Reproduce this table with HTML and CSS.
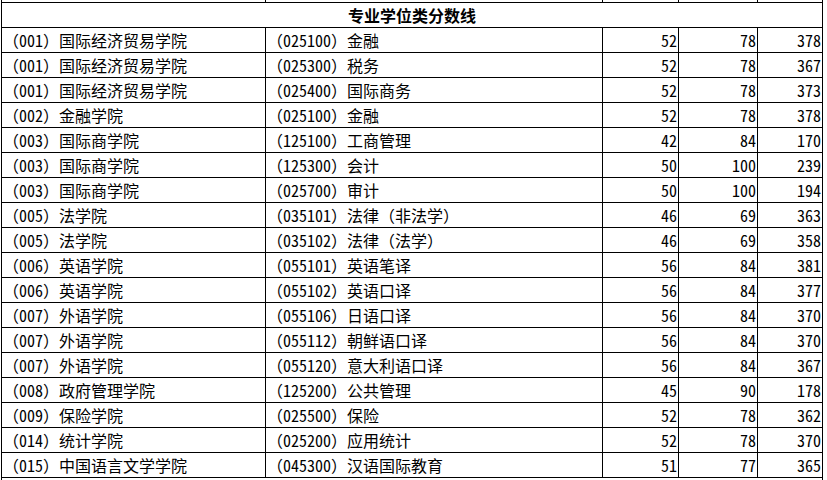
FILE: index.html
```html
<!DOCTYPE html>
<html lang="zh-CN">
<head>
<meta charset="utf-8">
<title>专业学位类分数线</title>
<link rel="stylesheet" href="styles.css">
</head>
<body>
<table class="scores">
  <colgroup>
    <col class="c-school">
    <col class="c-major">
    <col class="c-num1">
    <col class="c-num2">
    <col class="c-total">
  </colgroup>
  <tbody>
    <tr class="cut"><td></td><td></td><td></td><td></td><td></td></tr>
    <tr class="title"><td colspan="5">专业学位类分数线</td></tr>
    <tr><td>（<span class="d">001</span>）国际经济贸易学院</td><td>（<span class="d">025100</span>）金融</td><td class="n">52</td><td class="n">78</td><td class="n">378</td></tr>
    <tr><td>（<span class="d">001</span>）国际经济贸易学院</td><td>（<span class="d">025300</span>）税务</td><td class="n">52</td><td class="n">78</td><td class="n">367</td></tr>
    <tr><td>（<span class="d">001</span>）国际经济贸易学院</td><td>（<span class="d">025400</span>）国际商务</td><td class="n">52</td><td class="n">78</td><td class="n">373</td></tr>
    <tr><td>（<span class="d">002</span>）金融学院</td><td>（<span class="d">025100</span>）金融</td><td class="n">52</td><td class="n">78</td><td class="n">378</td></tr>
    <tr><td>（<span class="d">003</span>）国际商学院</td><td>（<span class="d">125100</span>）工商管理</td><td class="n">42</td><td class="n">84</td><td class="n">170</td></tr>
    <tr><td>（<span class="d">003</span>）国际商学院</td><td>（<span class="d">125300</span>）会计</td><td class="n">50</td><td class="n">100</td><td class="n">239</td></tr>
    <tr><td>（<span class="d">003</span>）国际商学院</td><td>（<span class="d">025700</span>）审计</td><td class="n">50</td><td class="n">100</td><td class="n">194</td></tr>
    <tr><td>（<span class="d">005</span>）法学院</td><td>（<span class="d">035101</span>）法律（非法学）</td><td class="n">46</td><td class="n">69</td><td class="n">363</td></tr>
    <tr><td>（<span class="d">005</span>）法学院</td><td>（<span class="d">035102</span>）法律（法学）</td><td class="n">46</td><td class="n">69</td><td class="n">358</td></tr>
    <tr><td>（<span class="d">006</span>）英语学院</td><td>（<span class="d">055101</span>）英语笔译</td><td class="n">56</td><td class="n">84</td><td class="n">381</td></tr>
    <tr><td>（<span class="d">006</span>）英语学院</td><td>（<span class="d">055102</span>）英语口译</td><td class="n">56</td><td class="n">84</td><td class="n">377</td></tr>
    <tr><td>（<span class="d">007</span>）外语学院</td><td>（<span class="d">055106</span>）日语口译</td><td class="n">56</td><td class="n">84</td><td class="n">370</td></tr>
    <tr><td>（<span class="d">007</span>）外语学院</td><td>（<span class="d">055112</span>）朝鲜语口译</td><td class="n">56</td><td class="n">84</td><td class="n">370</td></tr>
    <tr><td>（<span class="d">007</span>）外语学院</td><td>（<span class="d">055120</span>）意大利语口译</td><td class="n">56</td><td class="n">84</td><td class="n">367</td></tr>
    <tr><td>（<span class="d">008</span>）政府管理学院</td><td>（<span class="d">125200</span>）公共管理</td><td class="n">45</td><td class="n">90</td><td class="n">178</td></tr>
    <tr><td>（<span class="d">009</span>）保险学院</td><td>（<span class="d">025500</span>）保险</td><td class="n">52</td><td class="n">78</td><td class="n">362</td></tr>
    <tr><td>（<span class="d">014</span>）统计学院</td><td>（<span class="d">025200</span>）应用统计</td><td class="n">52</td><td class="n">78</td><td class="n">370</td></tr>
    <tr><td>（<span class="d">015</span>）中国语言文学学院</td><td>（<span class="d">045300</span>）汉语国际教育</td><td class="n">51</td><td class="n">77</td><td class="n">365</td></tr>
    <tr class="next"><td colspan="5"></td></tr>
  </tbody>
</table>
</body>
</html>
```

FILE: styles.css
```css
html, body {
  margin: 0;
  padding: 0;
  background: #ffffff;
}

body {
  overflow: hidden;
}

.scores {
  border-collapse: collapse;
  table-layout: fixed;
  width: 822px;
  margin: -23px 0 0 1px;
  font-family: "Noto Sans CJK SC", "Liberation Sans", sans-serif;
  font-size: 16px;
  color: #000000;
}

.c-school { width: 264px; }
.c-major { width: 337px; }
.c-num1 { width: 76px; }
.c-num2 { width: 79px; }
.c-total { width: 65px; }

.scores td {
  border: 1px solid #000000;
  height: 24px;
  padding: 0 0 0 1px;
  line-height: 24px;
  white-space: nowrap;
  overflow: hidden;
  vertical-align: middle;
}

.scores .d,
.scores td.n {
  font-feature-settings: "hwid" 1;
}

.scores td.n {
  text-align: right;
  padding: 0 1px 0 0;
}

.scores .title td {
  text-align: center;
  font-weight: bold;
  padding: 0;
}
```
